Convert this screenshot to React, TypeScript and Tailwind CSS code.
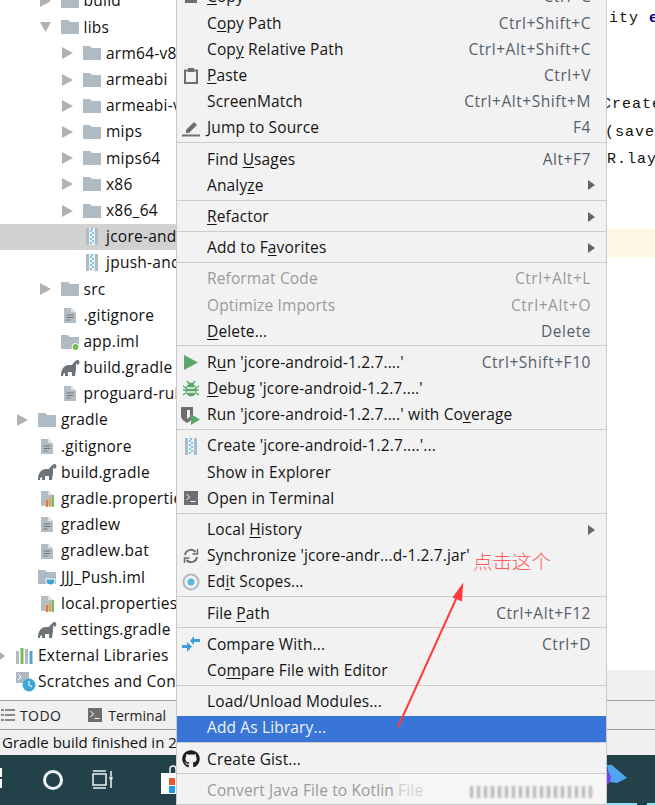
import { ReactNode } from "react";
import { FaGithub } from "react-icons/fa";

const ui = { fontFamily: '"Open Sans", "Noto Sans", sans-serif' };

// ---- icons ----
function Arrow({ open }: { open?: boolean }) {
  return (
    <svg width="11" height="12" viewBox="0 0 11 12" className="shrink-0">
      {open ? <path d="M0 1h11L5.500 11z" fill="#afb1b3" /> : <path d="M0 0l11 6-11 6z" fill="#afb1b3" />}
    </svg>
  );
}

function Folder({ badge }: { badge?: "green" | "cup" }) {
  return (
    <svg width="18" height="16" viewBox="0 0 18 16" className="shrink-0">
      <path d="M0 1h7l2 2h9v12H0z" fill="#afbac3" />
      {badge === "green" && <circle cx="14.500" cy="13" r="3.500" fill="#6fc04e" stroke="#fff" />}
      {badge === "cup" && <path d="M8 10h9v2a4 4 0 0 1-4 4h-1a4 4 0 0 1-4-4z" fill="#3fa7d6" stroke="#fff" />}
    </svg>
  );
}

function FileIcon({ bars }: { bars?: boolean }) {
  return (
    <svg width="14" height="17" viewBox="0 0 14 17" className="shrink-0">
      <path d="M1 1h7l5 5v10H1z" fill="#b4bdc4" />
      <path d="M8 0l5 5H8z" fill="#dfe3e6" />
      {bars ? (
        <>
          <rect x="6" y="10" width="2" height="7" fill="#e8763a" />
          <rect x="9" y="8" width="2" height="9" fill="#e8a33a" />
          <rect x="12" y="5" width="2" height="12" fill="#7cb95a" />
        </>
      ) : (
        <path d="M3.500 8h7M3.500 10.500h7M3.500 13h4" stroke="#6e7479" />
      )}
    </svg>
  );
}

function Gradle() {
  return (
    <svg width="19" height="16" viewBox="0 0 19 16" className="shrink-0">
      <path
        d="M0 16C0 9 3 5 8 5h3c1-2 3-4 5-5 2-.5 3 2 2 4-1 1-2 1-2-1-1 1-1 3-1 6l-1 7h-3v-4H7v4H4v-3c-1 0-2 1-2 3z"
        fill="#6c7478"
      />
    </svg>
  );
}

function Jar() {
  return (
    <svg width="12" height="17" viewBox="0 0 12 17" className="shrink-0">
      <rect x="0" y="0" width="12" height="17" fill="#afbac3" />
      <rect x="3" y="0" width="6" height="17" fill="#e8f0f4" />
      <path d="M5 1h2M4 3h2M6 5h2M4 7h2M6 9h2M4 11h2M6 13h2M4 15h2" stroke="#5db8e0" strokeWidth="1.500" />
    </svg>
  );
}

function Terminal({ size = 14 }: { size?: number }) {
  return (
    <svg width={size} height={size} viewBox="0 0 14 14" className="shrink-0">
      <rect width="14" height="14" fill="#6e6e6e" />
      <path d="M2.500 3l3 3-3 3M6.500 10.500h5" stroke="#fff" fill="none" />
    </svg>
  );
}

const icons: Record<string, ReactNode> = {
  copy: <div className="w-3 h-3 bg-[#6e6e6e]" />,
  paste: (
    <svg width="14" height="16" viewBox="0 0 14 16">
      <path d="M1 2.500h12v12.500H1z" fill="none" stroke="#6e6e6e" strokeWidth="2" />
      <rect x="4" y="0" width="6" height="4" fill="#6e6e6e" />
    </svg>
  ),
  jump: (
    <svg width="18" height="18" viewBox="0 0 18 18">
      <path d="M4 11l8-8 3 3-8 8H4z" fill="#6e6e6e" />
      <rect x="0" y="15.500" width="18" height="2" fill="#6e6e6e" />
    </svg>
  ),
  run: (
    <svg width="14" height="15" viewBox="0 0 14 15">
      <path d="M0 0l14 7.500L0 15z" fill="#59a869" />
    </svg>
  ),
  debug: (
    <svg width="18" height="18" viewBox="0 0 18 18">
      <path
        d="M5 1l2 2.500h4L13 1M1 6l3 2M17 6l-3 2M1 10h3M17 10h-3M1 15l3-2M17 15l-3-2"
        stroke="#59a869"
        strokeWidth="1.500"
        fill="none"
      />
      <ellipse cx="9" cy="10" rx="5.500" ry="6.500" fill="#59a869" />
      <path d="M5 8h8M5 12h8" stroke="#f2f2f2" strokeWidth="1.500" />
    </svg>
  ),
  coverage: (
    <svg width="20" height="20" viewBox="0 0 20 20">
      <path d="M0 2h12v9c0 3-3 5-6 7-3-2-6-4-6-7z" fill="#6e6e6e" />
      <path d="M6 5h3v7l-3 2z" fill="#f2f2f2" />
      <path d="M10 9l9 5.500-9 5.500z" fill="#59a869" />
    </svg>
  ),
  jar: <Jar />,
  terminal: <Terminal />,
  sync: (
    <svg width="16" height="16" viewBox="0 0 16 16" fill="none" stroke="#6e6e6e" strokeWidth="2">
      <path d="M2 7a6 6 0 0 1 10.500-3M14 9a6 6 0 0 1-10.500 3" />
      <path d="M14.500 1v5h-5M1.500 15v-5h5" strokeWidth="1.500" />
    </svg>
  ),
  scopes: (
    <svg width="18" height="18" viewBox="0 0 18 18">
      <circle cx="9" cy="9" r="7.500" fill="none" stroke="#afbac3" strokeWidth="2" />
      <circle cx="9" cy="9" r="3.500" fill="#5db8e0" />
    </svg>
  ),
  compare: (
    <svg width="18" height="16" viewBox="0 0 18 16" fill="#3d9fd8">
      <path d="M0 9h5V6l5 4.500L5 16v-4H0z" />
      <path d="M18 3h-6V0L8 5l4 4V6h6z" />
    </svg>
  ),
  github: <FaGithub size={18} color="#1b1b1b" />,
};

// ---- data ----
const tree: { d: number; label: string; kind: string; selected?: boolean }[] = [
  { d: 1, label: "build", kind: "closed" },
  { d: 1, label: "libs", kind: "open" },
  { d: 2, label: "arm64-v8a", kind: "closed" },
  { d: 2, label: "armeabi", kind: "closed" },
  { d: 2, label: "armeabi-v7a", kind: "closed" },
  { d: 2, label: "mips", kind: "closed" },
  { d: 2, label: "mips64", kind: "closed" },
  { d: 2, label: "x86", kind: "closed" },
  { d: 2, label: "x86_64", kind: "closed" },
  { d: 2, label: "jcore-android-1.2.7.jar", kind: "jar", selected: true },
  { d: 2, label: "jpush-android-3.2.0.jar", kind: "jar" },
  { d: 1, label: "src", kind: "closed" },
  { d: 1, label: ".gitignore", kind: "file" },
  { d: 1, label: "app.iml", kind: "iml" },
  { d: 1, label: "build.gradle", kind: "gradle" },
  { d: 1, label: "proguard-rules.pro", kind: "file" },
  { d: 0, label: "gradle", kind: "closed" },
  { d: 0, label: ".gitignore", kind: "file" },
  { d: 0, label: "build.gradle", kind: "gradle" },
  { d: 0, label: "gradle.properties", kind: "props" },
  { d: 0, label: "gradlew", kind: "file" },
  { d: 0, label: "gradlew.bat", kind: "file" },
  { d: 0, label: "JJJ_Push.iml", kind: "cup" },
  { d: 0, label: "local.properties", kind: "props" },
  { d: 0, label: "settings.gradle", kind: "gradle" },
];

type Item = { label: string; key?: string; icon?: string; sub?: boolean; off?: boolean; active?: boolean };

const groups: Item[][] = [
  [
    { label: "&Copy", key: "Ctrl+C", icon: "copy" },
    { label: "C&opy Path", key: "Ctrl+Shift+C" },
    { label: "Cop&y Relative Path", key: "Ctrl+Alt+Shift+C" },
    { label: "&Paste", key: "Ctrl+V", icon: "paste" },
    { label: "ScreenMatch", key: "Ctrl+Alt+Shift+M" },
    { label: "Jump to Source", key: "F4", icon: "jump" },
  ],
  [
    { label: "Find &Usages", key: "Alt+F7" },
    { label: "Analy&ze", sub: true },
  ],
  [{ label: "&Refactor", sub: true }],
  [{ label: "Add to F&avorites", sub: true }],
  [
    { label: "Reformat Code", key: "Ctrl+Alt+L", off: true },
    { label: "Optimize Imports", key: "Ctrl+Alt+O", off: true },
    { label: "&Delete...", key: "Delete" },
  ],
  [
    { label: "R&un 'jcore-android-1.2.7....'", key: "Ctrl+Shift+F10", icon: "run" },
    { label: "&Debug 'jcore-android-1.2.7....'", icon: "debug" },
    { label: "Run 'jcore-android-1.2.7....' with Co&verage", icon: "coverage" },
  ],
  [
    { label: "Create 'jcore-android-1.2.7....'...", icon: "jar" },
    { label: "Show in Explorer" },
    { label: "Open in Terminal", icon: "terminal" },
  ],
  [
    { label: "Local &History", sub: true },
    { label: "Synchronize 'jcore-andr...d-1.2.7.jar'", icon: "sync" },
    { label: "Ed&it Scopes...", icon: "scopes" },
  ],
  [{ label: "File &Path", key: "Ctrl+Alt+F12" }],
  [
    { label: "Compare With...", key: "Ctrl+D", icon: "compare" },
    { label: "Co&mpare File with Editor" },
  ],
  [
    { label: "Load/Unload Modules..." },
    { label: "Add As Library...", active: true },
  ],
  [{ label: "Create Gist...", icon: "github" }],
  [{ label: "Convert Java File to Kotlin File", off: true }],
];

function Mnemonic({ text }: { text: string }) {
  const i = text.indexOf("&");
  if (i < 0) return <>{text}</>;
  return (
    <>
      {text.slice(0, i)}
      <span className="underline decoration-1 underline-offset-2">{text[i + 1]}</span>
      {text.slice(i + 2)}
    </>
  );
}

function TreeRow({ d, label, kind, selected }: (typeof tree)[number]) {
  const arrow = kind === "closed" || kind === "open";
  return (
    <div
      className={`h-[26.2px] flex items-center whitespace-nowrap overflow-hidden ${selected ? "bg-[#d1d1d1]" : ""}`}
      style={{ paddingLeft: 16 + d * 22.5 }}
    >
      <div className="w-[22px] pl-[1px] shrink-0">{arrow && <Arrow open={kind === "open"} />}</div>
      <div className="w-[23px] shrink-0 flex items-center">
        {(kind === "closed" || kind === "open") && <Folder />}
        {kind === "iml" && <Folder badge="green" />}
        {kind === "cup" && <Folder badge="cup" />}
        {kind === "file" && (
          <div className="pl-[2px]">
            <FileIcon />
          </div>
        )}
        {kind === "props" && (
          <div className="pl-[2px]">
            <FileIcon bars />
          </div>
        )}
        {kind === "gradle" && <Gradle />}
        {kind === "jar" && (
          <div className="pl-[3px]">
            <Jar />
          </div>
        )}
      </div>
      <span className="text-[15.500px] tracking-[0.25px] text-[#101010]">{label}</span>
    </div>
  );
}

function MenuRow({ item }: { item: Item }) {
  const tone = item.active ? "bg-[#3875d7] text-[#eef3fb]" : item.off ? "text-[#9a9a9a]" : "text-[#141414]";
  return (
    <div className={`h-[26.2px] pb-[2px] flex items-center text-[15.500px] tracking-[0.14px] whitespace-nowrap ${tone}`}>
      <div className="w-[30px] pr-[2px] shrink-0 flex items-center justify-center">{item.icon && icons[item.icon]}</div>
      <span className="flex-1">
        <Mnemonic text={item.label} />
      </span>
      {item.key && (
        <span className={`pr-[15px] tracking-[0.55px] ${item.off ? "text-[#9a9a9a]" : "text-[#56606b]"}`}>{item.key}</span>
      )}
      {item.sub && (
        <svg width="7" height="10" viewBox="0 0 7 10" className="mr-[11px]">
          <path d="M0 0l7 5-7 5z" fill="#666" />
        </svg>
      )}
    </div>
  );
}

function Editor() {
  return (
    <div className="flex-1 flex flex-col overflow-hidden bg-white font-['Liberation_Mono',monospace] text-[15px] tracking-[1px] text-[#111] whitespace-nowrap">
      <div className="h-[670px] shrink-0 pl-[431px]">
        <div className="pt-[9px] leading-[20px] pl-[2px] h-[95px]">
          ity <span className="font-bold text-[#000080]">extends</span>
        </div>
        <div className="leading-[20px] h-[28px] -ml-[5px]">Create</div>
        <div className="leading-[20px] h-[27px] -ml-[2px]">(saved</div>
        <div className="leading-[20px] h-[79px]">R.layout</div>
        <div className="h-[29px] bg-[#fdf8e6]" />
      </div>
      <div className="flex-1 bg-[#f0f0f0]" />
    </div>
  );
}

export default function App() {
  return (
    <div className="relative w-[655px] h-[805px] overflow-hidden bg-white" style={ui}>
      <div className="h-[700px] flex">
        <div className="w-[176px] shrink-0 overflow-hidden -mt-[12px]">
          {tree.map((row, i) => (
            <TreeRow key={i} {...row} />
          ))}
          <div className="h-[26.2px] flex items-center whitespace-nowrap overflow-hidden text-[15.500px] tracking-[0.25px] text-[#101010]">
            <svg width="5" height="8" viewBox="0 0 5 8" className="shrink-0">
              <path d="M0 0l5 4-5 4z" fill="#afb1b3" />
            </svg>
            <svg width="18" height="16" viewBox="0 0 18 16" className="shrink-0 ml-[11px] mr-[4px]">
              <rect x="0" y="3" width="3" height="13" fill="#afbac3" />
              <rect x="4.500" y="0" width="3" height="16" fill="#7cb95a" />
              <rect x="9" y="1" width="3" height="15" fill="#afbac3" />
              <rect x="13.500" y="3" width="3" height="13" fill="#5a9ec9" />
            </svg>
            External Libraries
          </div>
          <div className="h-[26.2px] flex items-center whitespace-nowrap overflow-hidden text-[15.500px] tracking-[0.25px] text-[#101010]">
            <svg width="20" height="20" viewBox="0 0 20 20" className="shrink-0 ml-[16px] mr-[2px]">
              <rect x="0" y="0" width="13" height="11" fill="#afbac3" />
              <path d="M2 2l3 3-3 3" stroke="#fff" fill="none" />
              <circle cx="13" cy="13" r="6.500" fill="#3fa7d6" />
              <path d="M13 9v4l3 2" stroke="#fff" fill="none" />
            </svg>
            Scratches and Consoles
          </div>
        </div>
        <Editor />
      </div>

      <div className="h-[29px] bg-[#f0f0f0] border-t border-[#a0a0a0] flex items-center text-[14px] text-[#222] whitespace-nowrap">
        <svg width="14" height="12" viewBox="0 0 14 12" className="ml-[1px] mr-[5px] shrink-0" fill="#8a8a8a">
          <path d="M0 0h3v2H0zM4 0h10v2H4zM0 5h3v2H0zM4 5h10v2H4zM0 10h3v2H0zM4 10h10v2H4z" />
        </svg>
        <span className="tracking-[0.4px]">TODO</span>
        <div className="ml-[27px] mr-[6px]">
          <Terminal />
        </div>
        <span>Terminal</span>
      </div>
      <div className="h-[26px] bg-[#f0f0f0] border-t border-[#a0a0a0] flex items-center pl-[2px] text-[15px] text-[#111] whitespace-nowrap">
        Gradle build finished in 2 s 345 ms
      </div>

      <div className="h-[50px] bg-[#234148] flex items-center relative overflow-hidden">
        <div className="w-[2px] h-[20px] flex flex-col justify-between -mt-[5px]">
          <div className="h-[9px] bg-white" />
          <div className="h-[9px] bg-white" />
        </div>
        <div className="ml-[41px] w-[20px] h-[20px] rounded-full border-[3px] border-[#eef2f3]" />
        <svg width="21" height="20" viewBox="0 0 21 20" className="ml-[29px]" fill="none" stroke="#eef2f3" strokeWidth="1.500">
          <path d="M1 4h13v11H1zM1 1h13M1 18h13M19 1v5M19 9v9" />
          <rect x="17.500" y="6.500" width="3" height="3" fill="#eef2f3" stroke="none" />
        </svg>
        <svg width="16" height="32" viewBox="0 0 16 32" className="ml-[48px] mt-[2px]">
          <path d="M9 8V4a3 3 0 0 1 6 0v4" fill="none" stroke="#eef2f3" strokeWidth="1.500" />
          <rect x="0" y="8" width="16" height="21" fill="#fff" />
          <rect x="8" y="13" width="6" height="7" fill="#e8562a" />
          <rect x="8" y="21" width="6" height="7" fill="#1f9be8" />
        </svg>
        <svg width="21" height="20" viewBox="0 0 21 20" className="absolute left-[607px] top-[10px]">
          <path d="M0 0h5l15 13-10 5-7-1z" fill="#4fa6ef" />
          <path d="M0 4l4 8-1 5-3 3z" fill="#7a3df0" />
        </svg>
        <div className="absolute bottom-0 left-[607px] w-[30px] h-[2px] bg-[#8fe3f5]" />
        <div className="absolute bottom-0 left-[647px] w-[8px] h-[2px] bg-[#8fe3f5]" />
      </div>

      {/* context menu sits over the tree and the tool windows */}
      <div className="absolute left-[176px] top-[-16px] w-[431px] bg-[#f2f2f2] border border-[#c8c8c8]">
        {groups.map((g, i) => (
          <div key={i} className={i > 0 ? "border-t border-[#cdcdcd] pt-[4px]" : ""}>
            {g.map((item, j) => (
              <MenuRow key={j} item={item} />
            ))}
          </div>
        ))}
      </div>

      {/* watermark smudge */}
      <div className="absolute left-[400px] top-[774px] w-[206px] h-[30px] bg-[#f8f8f8]/60" />
      <div className="absolute left-[470px] top-[786px] w-[122px] h-[12px] blur-[1px] opacity-70 bg-[repeating-linear-gradient(90deg,#9a9a9a_0,#9a9a9a_3px,#f4f4f4_3px,#f4f4f4_7px)]" />

      {/* red annotation */}
      <svg width="655" height="805" viewBox="0 0 655 805" className="absolute left-0 top-0 pointer-events-none">
        <path d="M398 727L456 599" stroke="#ff3b3b" strokeWidth="2" />
        <path d="M462 586L454 597 461 600z" fill="#ff3b3b" stroke="#ff3b3b" strokeWidth="2" />
      </svg>
      <div className="absolute left-[473px] top-[548px] text-[19.500px] leading-[26px] text-[#ff5c5c] whitespace-nowrap font-['Noto_Sans_CJK_SC',sans-serif] font-light">
        点击这个
      </div>
    </div>
  );
}
